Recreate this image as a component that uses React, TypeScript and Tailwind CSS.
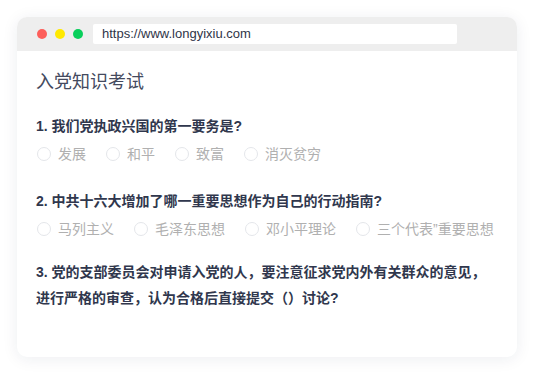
import React from "react";

const questions = [
  {
    title: "1. 我们党执政兴国的第一要务是?",
    options: ["发展", "和平", "致富", "消灭贫穷"],
  },
  {
    title: "2. 中共十六大增加了哪一重要思想作为自己的行动指南?",
    options: ["马列主义", "毛泽东思想", "邓小平理论", "三个代表”重要思想"],
  },
];

function Radio({ label }: { label: string }) {
  return (
    <label className="flex items-center shrink-0 mr-[20px] cursor-pointer">
      <span className="w-[14px] h-[14px] rounded-full border border-[#e4e6ea] bg-white shrink-0"></span>
      <span className="ml-[7px] text-[14px] leading-[20px] text-[#b0b0b0] whitespace-nowrap">{label}</span>
    </label>
  );
}

export default function App() {
  return (
    <div
      className="w-[534px] h-[374px] bg-white p-[17px]"
      style={{ fontFamily: '"Liberation Sans", "Noto Sans CJK SC", sans-serif' }}
    >
      <div className="h-[340px] rounded-[10px] bg-white overflow-hidden shadow-[0_2px_16px_rgba(30,40,80,0.08)]">
        <div className="h-[34px] bg-[#eeeeee] flex items-center pl-[20px]">
          <div className="flex items-center gap-[8px]">
            <span className="w-[10px] h-[10px] rounded-full bg-[#fd5e5a]"></span>
            <span className="w-[10px] h-[10px] rounded-full bg-[#ffe900]"></span>
            <span className="w-[10px] h-[10px] rounded-full bg-[#08cf5b]"></span>
          </div>
          <div className="ml-[10px] w-[364px] h-[20px] bg-white rounded-[2px] flex items-center pl-[9px] text-[13px] text-[#2f3548]">
            https://www.longyixiu.com
          </div>
        </div>

        <div className="pl-[19px] pr-[28px] pt-[19px]">
          <h1 className="text-[18px] leading-[24px] text-[#444a5e] font-normal">入党知识考试</h1>

          {questions.map((q, i) => (
            <div key={i} className={i === 0 ? "mt-[22px]" : "mt-[27px]"}>
              <p className="text-[14px] leading-[20px] font-bold text-[#30374d]">{q.title}</p>
              <div className="flex items-center mt-[8px] pl-[1px]">
                {q.options.map((o) => (
                  <Radio key={o} label={o} />
                ))}
              </div>
            </div>
          ))}

          <p className="mt-[20px] text-[14px] leading-[26px] font-bold text-[#30374d]">
            3. 党的支部委员会对申请入党的人，要注意征求党内外有关群众的意见，进行严格的审查，认为合格后直接提交（）讨论?
          </p>
        </div>
      </div>
    </div>
  );
}
